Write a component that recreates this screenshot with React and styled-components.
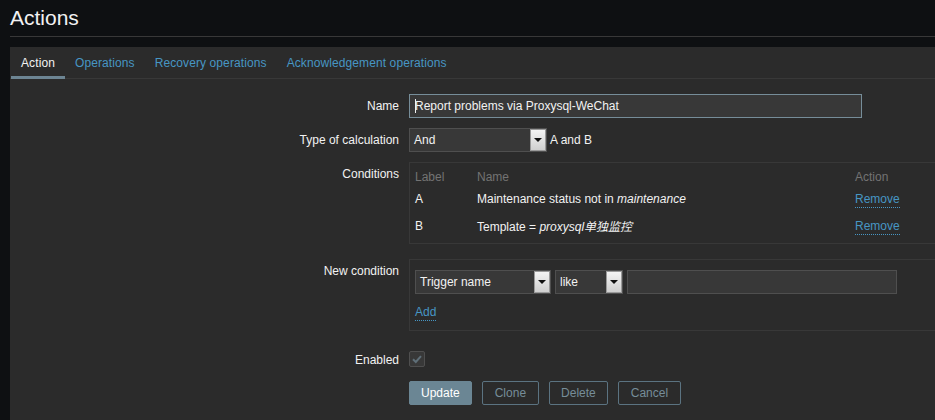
import React from 'react';
import styled, { createGlobalStyle } from 'styled-components';

const GlobalStyle = createGlobalStyle`
  html, body {
    margin: 0;
    padding: 0;
    background: #0e1012;
  }
  body {
    font-family: "Liberation Sans", Arial, sans-serif;
    font-size: 12px;
    color: #f2f2f2;
  }
`;

const Page = styled.div`
  position: relative;
  width: 935px;
  height: 420px;
  overflow: hidden;
  background: #0e1012;
`;

const Header = styled.div`
  margin-left: 10px;
  height: 36px;
  border-bottom: 1px solid #383838;
  display: flex;
  align-items: center;
`;

const Title = styled.h1`
  margin: 0;
  font-size: 21px;
  font-weight: normal;
  color: #f2f2f2;
  line-height: 36px;
`;

const Panel = styled.div`
  margin: 10px 0 0 10px;
  background: #2b2b2b;
  height: 380px;
`;

const TabBar = styled.div`
  display: flex;
  height: 31px;
  border-bottom: 1px solid #383838;
  padding-left: 1px;
`;

const Tab = styled.div`
  padding: 1px 10px 0;
  line-height: 31px;
  letter-spacing: 0.1px;
  color: ${p => (p.$active ? '#f2f2f2' : '#4796c4')};
  border-bottom: 3px solid ${p => (p.$active ? '#6d8593' : 'transparent')};
  margin-bottom: -2px;
  box-sizing: border-box;
  height: 32px;
`;

const Form = styled.div`
  padding-top: 15px;
`;

const Row = styled.div`
  display: grid;
  grid-template-columns: 389px 1fr;
  column-gap: 10px;
  margin-top: ${p => p.$mt || 0}px;
`;

const Label = styled.div`
  text-align: right;
  line-height: 22px;
  padding-top: 1px;
  white-space: nowrap;
`;

const Field = styled.div`
  display: flex;
  align-items: ${p => p.$align || 'center'};
  gap: ${p => p.$gap || 0}px;
  min-width: 0;
`;

const TextInput = styled.div`
  box-sizing: border-box;
  width: ${p => p.$w}px;
  height: 24px;
  background: #383838;
  border: 1px solid ${p => (p.$focus ? '#768d99' : '#4f4f4f')};
  padding: 0 5px;
  line-height: 22px;
  color: #f2f2f2;
  white-space: nowrap;
`;

const Caret = styled.span`
  display: inline-block;
  width: 1px;
  height: 14px;
  background: #f2f2f2;
  vertical-align: -3px;
  margin-right: -1px;
`;

const Select = styled.div`
  box-sizing: border-box;
  width: ${p => p.$w}px;
  height: 24px;
  background: #383838;
  border: 1px solid #4f4f4f;
  display: flex;
  align-items: stretch;
  flex-shrink: 0;
`;

const SelectText = styled.div`
  flex: 1;
  padding-left: 4px;
  line-height: 22px;
  color: #f2f2f2;
  white-space: nowrap;
  overflow: hidden;
`;

const ArrowBox = styled.div`
  width: 16px;
  box-sizing: border-box;
  border: 1px solid #9a9a9a;
  background: linear-gradient(#f4f4f4, #cfcfcf);
  display: flex;
  align-items: center;
  justify-content: center;
`;

const Triangle = styled.div`
  width: 0;
  height: 0;
  border-left: 4px solid transparent;
  border-right: 4px solid transparent;
  border-top: 4px solid #111;
`;

const Plain = styled.span`
  color: #f2f2f2;
  white-space: nowrap;
`;

const Box = styled.div`
  box-sizing: border-box;
  width: ${p => p.$w}px;
  border: 1px solid #383838;
  padding: ${p => p.$pad};
  flex-shrink: 0;
`;

const CondGrid = styled.div`
  display: grid;
  grid-template-columns: 62px 378px 80px;
  grid-auto-rows: 27px;
  grid-template-rows: 18px;
  align-items: center;
`;

const HeadCell = styled.div`
  color: #737373;
  line-height: 18px;
  padding-top: 2px;
`;

const Cell = styled.div`
  color: #f2f2f2;
  white-space: nowrap;
  font-family: "Liberation Sans", "Noto Sans CJK SC", sans-serif;
`;

const Link = styled.span`
  color: #4796c4;
  border-bottom: 1px dotted #4796c4;
  padding-bottom: 1px;
`;

const AddLine = styled.div`
  margin-top: 8px;
  line-height: 20px;
`;

const Checkbox = styled.div`
  box-sizing: border-box;
  width: 16px;
  height: 16px;
  margin-top: 3px;
  background: #383838;
  border: 1px solid #4f4f4f;
  border-radius: 2px;
  display: flex;
  align-items: center;
  justify-content: center;
`;

const Buttons = styled.div`
  display: flex;
  gap: 10px;
`;

const Button = styled.button`
  box-sizing: border-box;
  height: 24px;
  padding: 0 ${p => p.$px || 10}px;
  font-family: "Liberation Sans", Arial, sans-serif;
  font-size: 12px;
  border: 1px solid ${p => (p.$primary ? '#6b8694' : '#5b7381')};
  background: ${p => (p.$primary ? '#6b8694' : 'transparent')};
  color: ${p => (p.$primary ? '#ffffff' : '#768d99')};
  border-radius: 2px;
  cursor: pointer;
`;

const Watermark = styled.div`
  position: absolute;
  left: ${p => p.$x}px;
  top: ${p => p.$y}px;
  transform: rotate(-55deg);
  font-size: 24px;
  font-weight: bold;
  color: rgba(255, 255, 255, 0.022);
  pointer-events: none;
  white-space: nowrap;
`;

const DropSelect = ({ w, value }) => (
  <Select $w={w}>
    <SelectText>{value}</SelectText>
    <ArrowBox>
      <Triangle />
    </ArrowBox>
  </Select>
);

const marks = [
  [480, 60], [355, 165], [250, 270], [170, 345], [580, 150]
];

const App = () => {
  return (
    <Page>
      <GlobalStyle />
      <Header>
        <Title>Actions</Title>
      </Header>
      <Panel>
        <TabBar>
          <Tab $active>Action</Tab>
          <Tab>Operations</Tab>
          <Tab>Recovery operations</Tab>
          <Tab>Acknowledgement operations</Tab>
        </TabBar>
        <Form>
          <Row>
            <Label>Name</Label>
            <Field>
              <TextInput $w={453} $focus>
                <Caret />Report problems via Proxysql-WeChat
              </TextInput>
            </Field>
          </Row>
          <Row $mt={10}>
            <Label>Type of calculation</Label>
            <Field $gap={3}>
              <DropSelect w={138} value="And" />
              <Plain>A and B</Plain>
            </Field>
          </Row>
          <Row $mt={10}>
            <Label>Conditions</Label>
            <Field>
              <Box $w={536} $pad="4px 5px 4px 5px">
                <CondGrid>
                  <HeadCell>Label</HeadCell>
                  <HeadCell>Name</HeadCell>
                  <HeadCell>Action</HeadCell>
                  <Cell>A</Cell>
                  <Cell>Maintenance status not in <i>maintenance</i></Cell>
                  <Cell><Link>Remove</Link></Cell>
                  <Cell>B</Cell>
                  <Cell>Template = <i>proxysql单独监控</i></Cell>
                  <Cell><Link>Remove</Link></Cell>
                </CondGrid>
              </Box>
            </Field>
          </Row>
          <Row $mt={15}>
            <Label>New condition</Label>
            <Field>
              <Box $w={536} $pad="10px 5px 8px 5px">
                <Field $gap={4}>
                  <DropSelect w={136} value="Trigger name" />
                  <DropSelect w={68} value="like" />
                  <TextInput $w={270} />
                </Field>
                <AddLine><Link>Add</Link></AddLine>
              </Box>
            </Field>
          </Row>
          <Row $mt={17}>
            <Label>Enabled</Label>
            <Field $align="flex-start">
              <Checkbox>
                <svg width="12" height="12" viewBox="0 0 12 12">
                  <path d="M2 6.2 L4.8 9 L10 3.2" fill="none" stroke="#5f6f78" strokeWidth="2" />
                </svg>
              </Checkbox>
            </Field>
          </Row>
          <Row $mt={10}>
            <div />
            <Buttons>
              <Button $primary $px={11}>Update</Button>
              <Button $px={12}>Clone</Button>
              <Button $px={11}>Delete</Button>
              <Button $px={12}>Cancel</Button>
            </Buttons>
          </Row>
        </Form>
      </Panel>
      {marks.map(([x, y], i) => (
        <Watermark key={i} $x={x} $y={y}>33664</Watermark>
      ))}
    </Page>
  );
};

export default App;
